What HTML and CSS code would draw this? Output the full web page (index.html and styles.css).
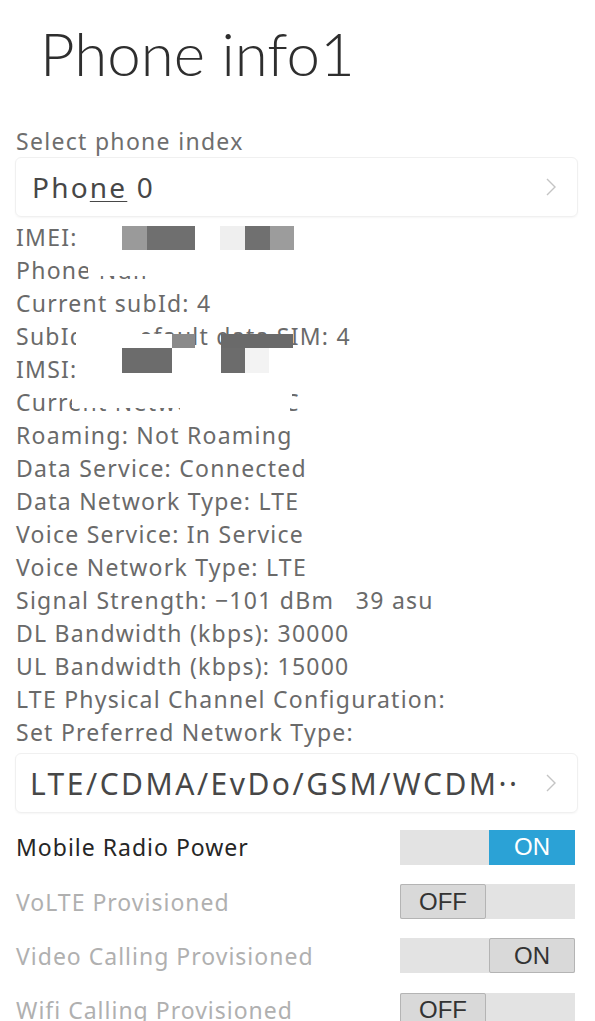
FILE: index.html
```html
<!DOCTYPE html>
<html>
<head>
<meta charset="utf-8">
<link rel="stylesheet" href="styles.css">
</head>
<body>
<div class="page">
  <h1 class="title">Phone info1</h1>

  <div class="label">Select phone index</div>
  <div class="spinner">
    <span class="spinner-text">Pho<span class="ul">ne</span> 0</span>
    <svg class="chev" width="12" height="20" viewBox="0 0 12 20"><path d="M2 2 L10 10 L2 18" fill="none" stroke="#c4c4c4" stroke-width="1.4"/></svg>
  </div>

  <div class="info">
    <div class="line">IMEI:</div>
    <div class="line">Phone Number: </div>
    <div class="line">Current subId: 4</div>
    <div class="line">SubId of default data SIM: 4</div>
    <div class="line">IMSI:</div>
    <div class="line">Current Network: CMCC</div>
    <div class="line">Roaming: Not Roaming</div>
    <div class="line">Data Service: Connected</div>
    <div class="line">Data Network Type: LTE</div>
    <div class="line">Voice Service: In Service</div>
    <div class="line">Voice Network Type: LTE</div>
    <div class="line">Signal Strength: −101 dBm&nbsp;&nbsp;&nbsp;39 asu</div>
    <div class="line">DL Bandwidth (kbps): 30000</div>
    <div class="line">UL Bandwidth (kbps): 15000</div>
    <div class="line">LTE Physical Channel Configuration:</div>
    <div class="line">Set Preferred Network Type:</div>

    <div class="mask m1"></div>
    <div class="mask m1b"></div>
    <div class="mask m2"></div>
    <div class="mask m2b"></div>
    <div class="mask m4"></div>
    <div class="mask m4b"></div>

    <div class="px" style="left:122px;top:5px;width:25px;height:24px;background:#9a9a9a"></div>
    <div class="px" style="left:147px;top:5px;width:48px;height:24px;background:#6f6f6f"></div>
    <div class="px" style="left:220px;top:5px;width:25px;height:24px;background:#efefef"></div>
    <div class="px" style="left:245px;top:5px;width:25px;height:24px;background:#707070"></div>
    <div class="px" style="left:270px;top:5px;width:24px;height:24px;background:#9c9c9c"></div>

    <div class="px" style="left:172px;top:113px;width:23px;height:14px;background:#8a8a8a"></div>
    <div class="px" style="left:221px;top:113px;width:72px;height:14px;background:#6a6a6a"></div>
    <div class="px" style="left:122px;top:127px;width:50px;height:25px;background:#6c6c6c"></div>
    <div class="px" style="left:221px;top:127px;width:24px;height:25px;background:#6c6c6c"></div>
    <div class="px" style="left:245px;top:127px;width:24px;height:25px;background:#f3f3f3"></div>
  </div>

  <div class="spinner spinner2">
    <span class="spinner-text">LTE/CDMA/EvDo/GSM/WCDM··</span>
    <svg class="chev" width="12" height="20" viewBox="0 0 12 20"><path d="M2 2 L10 10 L2 18" fill="none" stroke="#c4c4c4" stroke-width="1.4"/></svg>
  </div>

  <div class="toggles">
    <div class="row">
      <span class="row-label dark">Mobile Radio Power</span>
      <div class="switch on-blue"><span class="knob">ON</span></div>
    </div>
    <div class="row">
      <span class="row-label">VoLTE Provisioned</span>
      <div class="switch off"><span class="knob">OFF</span></div>
    </div>
    <div class="row">
      <span class="row-label">Video Calling Provisioned</span>
      <div class="switch on"><span class="knob">ON</span></div>
    </div>
    <div class="row">
      <span class="row-label">Wifi Calling Provisioned</span>
      <div class="switch off"><span class="knob">OFF</span></div>
    </div>
  </div>
</div>
</body>
</html>
```

FILE: styles.css
```css
html, body {
  margin: 0;
  padding: 0;
  background: #ffffff;
}
body {
  font-family: "Noto Sans", "Open Sans", sans-serif;
  width: 595px;
  height: 1021px;
  overflow: hidden;
}
.page {
  display: flex;
  flex-direction: column;
}
.title {
  margin: 0;
  padding: 18px 0 0 40px;
  font-family: "Lato", sans-serif;
  font-weight: 300;
  font-size: 60px;
  line-height: 70px;
  color: #2e2e2e;
}
.label {
  margin-top: 40px;
  padding-left: 16px;
  font-size: 23px;
  line-height: 26px;
  letter-spacing: 1.3px;
  color: #6e6e6e;
}
.spinner {
  margin: 3px 17px 0 15px;
  height: 60px;
  box-sizing: border-box;
  border: 1px solid #f0f0f0;
  border-radius: 6px;
  box-shadow: 0 1px 2px rgba(0,0,0,0.04);
  display: flex;
  align-items: center;
  justify-content: space-between;
  padding: 0 20px 0 16px;
}
.spinner-text {
  font-size: 28px;
  letter-spacing: 2.2px;
  color: #474747;
}
.ul {
  text-decoration: underline;
  text-decoration-thickness: 1px;
  text-underline-offset: 3px;
}
.info {
  position: relative;
  padding-left: 16px;
  margin-top: 4px;
}
.line {
  font-size: 23px;
  line-height: 33px;
  height: 33px;
  letter-spacing: 1.25px;
  color: #6a6a6a;
  white-space: nowrap;
}
.px {
  position: absolute;
}
.mask {
  position: absolute;
  background: #ffffff;
}
.m1 { left: 88px; top: 33px; width: 220px; height: 22px; }
.m1b { left: 150px; top: 33px; width: 200px; height: 33px; }
.m2 { left: 76px; top: 99px; width: 66px; height: 33px; }
.m2b { left: 142px; top: 113px; width: 30px; height: 14px; }
.m4 { left: 72px; top: 165px; width: 220px; height: 22px; }
.m4b { left: 180px; top: 165px; width: 110px; height: 33px; }
.spinner2 {
  margin-top: 4px;
  padding-left: 14px;
}
.spinner2 .spinner-text {
  font-size: 30px;
  letter-spacing: 2.5px;
}
.toggles {
  margin-top: 7px;
  display: flex;
  flex-direction: column;
}
.row {
  display: flex;
  align-items: center;
  justify-content: space-between;
  height: 54.4px;
  padding: 0 20px 0 16px;
}
.row-label {
  font-size: 23px;
  letter-spacing: 1px;
  color: #b0b0b0;
}
.row-label.dark {
  color: #262626;
}
.switch {
  width: 175px;
  height: 35px;
  background: #e3e3e3;
  display: flex;
  box-sizing: border-box;
}
.knob {
  width: 86px;
  height: 100%;
  box-sizing: border-box;
  display: flex;
  align-items: center;
  justify-content: center;
  font-family: "Liberation Sans", Arial, sans-serif;
  font-size: 24px;
  color: #333333;
  background: #d9d9d9;
  border: 1px solid #b4b4b4;
  border-radius: 2px;
}
.switch.on, .switch.on-blue {
  justify-content: flex-end;
}
.switch.on-blue .knob {
  background: #2ba2d6;
  border: none;
  border-radius: 0;
  color: #ffffff;
}
```
